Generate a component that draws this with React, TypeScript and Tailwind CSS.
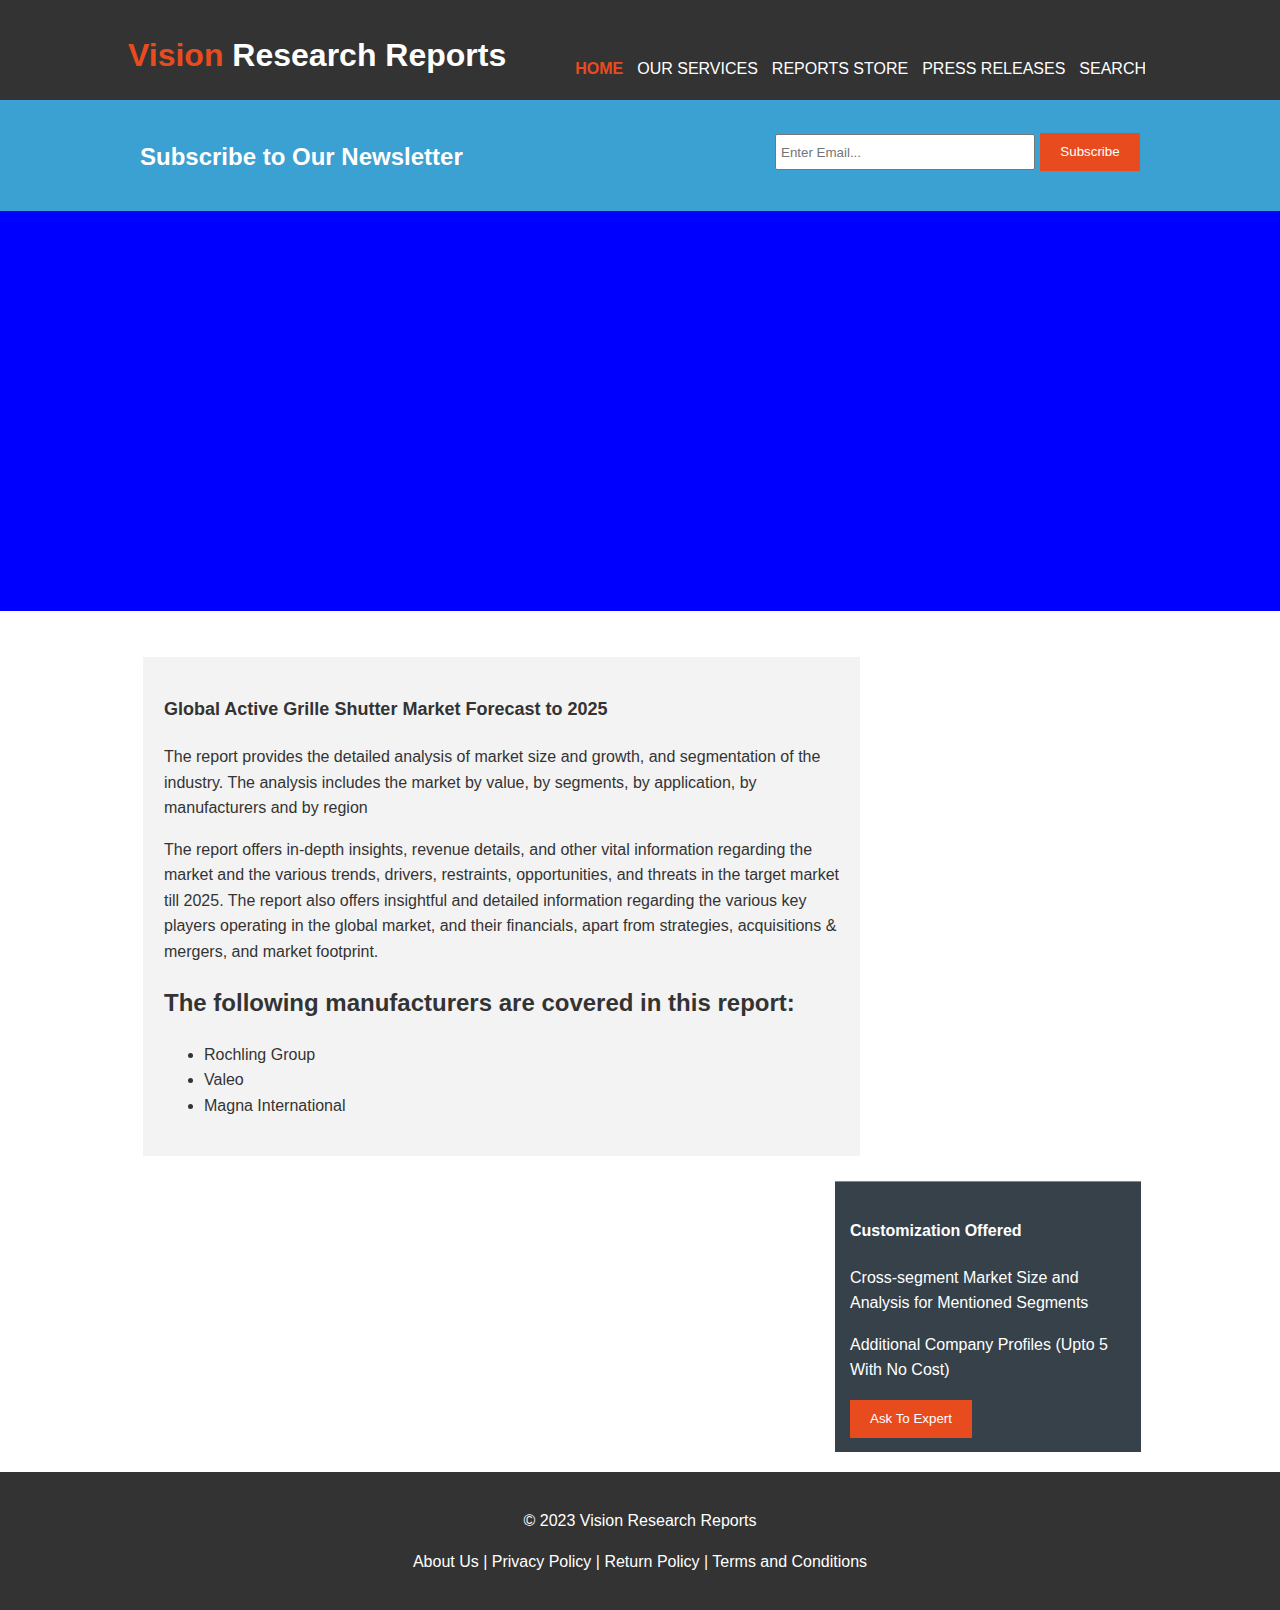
const NAV = ['OUR SERVICES', 'REPORTS STORE', 'PRESS RELEASES', 'SEARCH']

const MANUFACTURERS = ['Rochling Group', 'Valeo', 'Magna International']

export default function App() {
  return (
    <div className="min-h-[1610px] bg-white font-['Liberation_Sans',Arial,sans-serif] text-[#333333]">
      {/* Header */}
      <header className="h-[100px] bg-[#333333]">
        <div className="mx-auto flex w-[1024px] items-start">
          <h1 className="mt-[37px] whitespace-nowrap text-[32px] font-bold leading-[37px]">
            <span className="text-[#e84c1e]">Vision</span> <span className="text-white">Research Reports</span>
          </h1>
          <nav className="ml-[69px] mt-[60px] flex w-[570px] overflow-hidden whitespace-nowrap text-[16px] leading-[18px]">
            <a className="mr-[14px] font-bold text-[#e84c1e]">HOME</a>
            {NAV.map((n) => (
              <a key={n} className="mr-[14px] shrink-0 text-white">
                {n}
              </a>
            ))}
          </nav>
        </div>
      </header>

      {/* Newsletter */}
      <section className="h-[111px] bg-[#3ba0d2]">
        <div className="mx-auto flex h-full w-[1000px] items-center justify-between">
          <h2 className="mt-[2px] text-[24px] font-bold text-white">Subscribe to Our Newsletter</h2>
          <form className="mt-[-7px] flex items-center gap-[5px]">
            <input
              type="email"
              placeholder="Enter Email..."
              className="h-[36px] w-[260px] rounded-[2px] border border-[#767676] bg-white px-[5px] text-[13.33px] text-[#333] placeholder:text-[#757575]"
            />
            <button className="h-[38px] w-[100px] bg-[#e84c1e] text-[13.33px] text-white">Subscribe</button>
          </form>
        </div>
      </section>

      {/* Hero */}
      <div className="h-[400px] bg-[#0000ff]" />

      {/* Main */}
      <main className="mx-auto flex w-[1024px] flex-col pt-[46px] pb-[20px]">
        <article className="ml-[15px] w-[717px] bg-[#f3f3f3] px-[21px] pt-[38px] pb-[38px]">
          <h3 className="text-[18px] font-bold leading-[29px]">Global Active Grille Shutter Market Forecast to 2025</h3>
          <p className="mt-[20px] text-[16px] leading-[25.5px]">
            The report provides the detailed analysis of market size and growth, and segmentation of the industry. The
            analysis includes the market by value, by segments, by application, by manufacturers and by region
          </p>
          <p className="mt-[16px] text-[16px] leading-[25.5px]">
            The report offers in-depth insights, revenue details, and other vital information regarding the market and
            the various trends, drivers, restraints, opportunities, and threats in the target market till 2025. The
            report also offers insightful and detailed information regarding the various key players operating in the
            global market, and their financials, apart from strategies, acquisitions &amp; mergers, and market footprint.
          </p>
          <h2 className="mt-[20px] text-[24px] font-bold leading-[38px]">
            The following manufacturers are covered in this report:
          </h2>
          <ul className="mt-[20px] list-disc pl-10 text-[16px] leading-[25.3px]">
            {MANUFACTURERS.map((m) => (
              <li key={m}>{m}</li>
            ))}
          </ul>
        </article>

        <aside className="mt-[25px] ml-auto mr-[11px] w-[306px] border-t border-[#7d8a90] bg-[#36414a] px-[15px] pt-[36px] pb-[14px] text-white">
          <h4 className="text-[16px] font-bold leading-[25px]">Customization Offered</h4>
          <p className="mt-[22px] text-[16px] leading-[25px]">Cross-segment Market Size and Analysis for Mentioned Segments</p>
          <p className="mt-[17px] text-[16px] leading-[25px]">Additional Company Profiles (Upto 5 With No Cost)</p>
          <button className="mt-[18px] h-[38px] w-[122px] bg-[#e84c1e] text-[13.33px] text-white">Ask To Expert</button>
        </aside>
      </main>

      {/* Footer */}
      <footer className="bg-[#333333] py-[36px] text-center text-[16px] leading-[25.6px] text-white">
        <p>© 2023 Vision Research Reports</p>
        <p className="mt-[16px]">
          <a>About Us</a> | <a>Privacy Policy</a> | <a>Return Policy</a> | <a>Terms and Conditions</a>
        </p>
      </footer>
    </div>
  )
}
